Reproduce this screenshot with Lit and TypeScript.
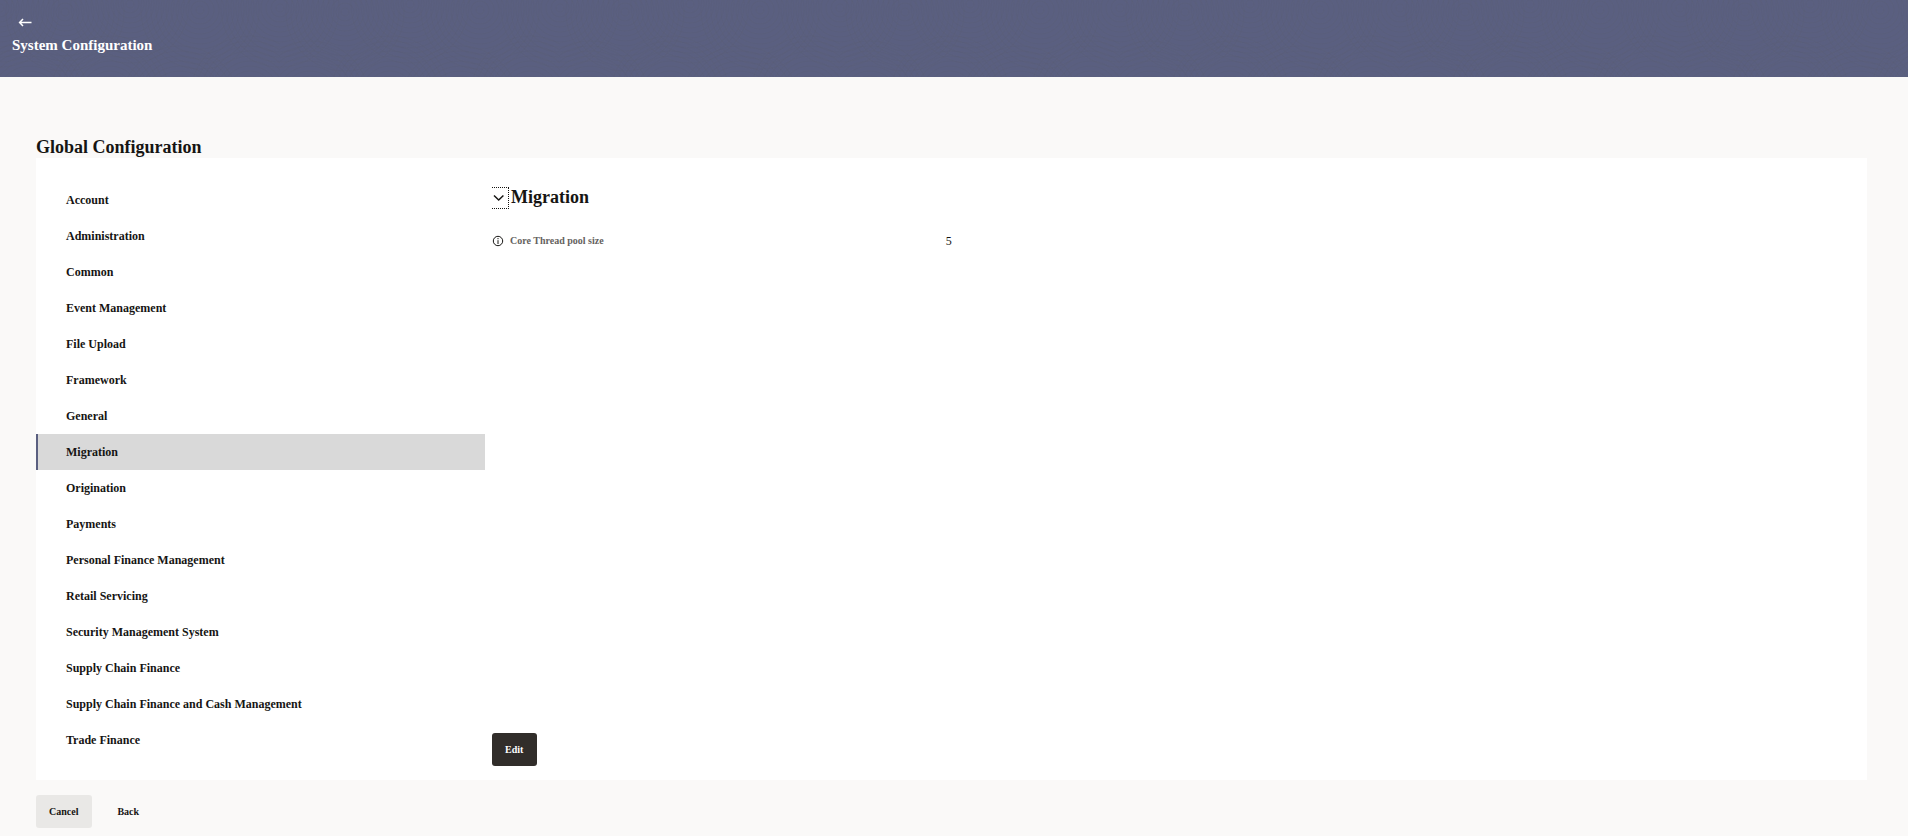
import { LitElement, html, css, svg } from "lit";
import { customElement, state } from "lit/decorators.js";
import { classMap } from "lit/directives/class-map.js";

const CATEGORIES = [
  "Account",
  "Administration",
  "Common",
  "Event Management",
  "File Upload",
  "Framework",
  "General",
  "Migration",
  "Origination",
  "Payments",
  "Personal Finance Management",
  "Retail Servicing",
  "Security Management System",
  "Supply Chain Finance",
  "Supply Chain Finance and Cash Management",
  "Trade Finance",
];

const RING_CENTRES = [
  [0, 8], [65, 12], [130, 4], [200, 10], [280, 8], [30, 100], [110, 95], [180, 105], [250, 95],
];

@customElement("app-root")
export class AppRoot extends LitElement {
  static styles = css`
    :host {
      display: block;
      min-height: 100vh;
      background: #faf9f8;
      color: #161513;
      font-family: "Liberation Serif", "Times New Roman", serif;
      font-weight: 700;
    }
    * {
      box-sizing: border-box;
    }
    button {
      font: inherit;
      color: inherit;
      border: 0;
      background: none;
      cursor: pointer;
    }
    h1,
    h2,
    h3,
    ul,
    dl,
    dd {
      margin: 0;
      padding: 0;
    }
    .header {
      display: grid;
      background: #5a5f80;
      color: #fff;
      overflow: hidden;
    }
    .rings,
    .bar {
      grid-area: 1 / 1;
    }
    .rings {
      width: 100%;
      height: 0;
      min-height: 100%;
    }
    .bar {
      padding: 14px 12px 22px;
    }
    .back-arrow {
      display: block;
      padding: 0 6px;
      height: 18px;
    }
    .back-arrow svg {
      display: block;
    }
    .title {
      margin-top: 3px;
      font-size: 15px;
      line-height: 20px;
    }
    .content {
      padding: 60px 41px 8px 36px;
    }
    .heading {
      padding-bottom: 1px;
      font-size: 18px;
      line-height: 20px;
    }
    .panel {
      display: flex;
      gap: 7px;
      background: #fff;
    }
    .nav {
      flex: 0 0 449px;
      padding: 24px 0 22px;
      list-style: none;
    }
    .item {
      display: block;
      width: 100%;
      height: 36px;
      padding: 0 28px;
      border-left: 2px solid transparent;
      text-align: left;
      font-size: 12px;
    }
    .item.active {
      background: #d9d9d9;
      border-left-color: #5a5f80;
    }
    .detail {
      flex: 1;
      display: flex;
      flex-direction: column;
      padding: 29px 14px 14px 0;
    }
    .section {
      display: flex;
      align-items: center;
      gap: 2px;
    }
    .section-title {
      font-size: 18px;
      line-height: 20px;
      padding-bottom: 2px;
    }
    .toggle {
      display: flex;
      align-items: center;
      width: 17px;
      height: 22px;
      padding: 0 0 0 1px;
      border: 1px dotted #161513;
      border-left: 0;
    }
    .row {
      display: grid;
      grid-template-columns: 1fr 2fr;
      align-items: center;
      margin-top: 23px;
      line-height: 18px;
    }
    .label {
      display: flex;
      align-items: center;
      gap: 6px;
      font-size: 10px;
      color: #65625e;
    }
    .value {
      font-size: 12px;
      font-weight: 400;
    }
    .button {
      height: 33px;
      padding: 0 14px 0 13px;
      border-radius: 3px;
      font-size: 10px;
    }
    .edit {
      align-self: flex-start;
      margin-top: auto;
      background: #312d2a;
      color: #fff;
    }
    .footer {
      display: flex;
      gap: 12px;
      padding-top: 15px;
    }
    .cancel {
      background: #e9e8e6;
    }
  `;

  @state() private selected = "Migration";
  @state() private open = true;

  private rings() {
    return html`<svg class="rings" aria-hidden="true">
      <defs>
        <pattern id="rings" width="280" height="150" patternUnits="userSpaceOnUse">
          ${RING_CENTRES.map(([x, y]) =>
            Array.from({ length: 12 }, (_, i) => svg`<circle cx=${x} cy=${y} r=${4 + i * 5}
              fill="none" stroke="#565b72" stroke-opacity="0.25" stroke-width="1.5" />`)
          )}
        </pattern>
      </defs>
      <rect width="100%" height="100%" fill="url(#rings)" />
    </svg>`;
  }

  render() {
    return html`
      <header class="header">
        ${this.rings()}
        <div class="bar">
          <button class="back-arrow" aria-label="Go back">
            <svg width="15" height="18" viewBox="0 0 15 18" fill="none" stroke="#fff" stroke-width="1.5">
              <path d="M13.500 8.500H2M5 5L1.600 8.500L5 12" />
            </svg>
          </button>
          <h1 class="title">System Configuration</h1>
        </div>
      </header>
      <main class="content">
        <h2 class="heading">Global Configuration</h2>
        <div class="panel">
          <ul class="nav">
            ${CATEGORIES.map(
              (name) => html`<li>
                <button
                  class=${classMap({ item: true, active: name === this.selected })}
                  @click=${() => (this.selected = name)}
                >${name}</button>
              </li>`
            )}
          </ul>
          <section class="detail">
            <div class="section">
              <button
                class="toggle"
                aria-label="Toggle section"
                aria-expanded=${this.open}
                @click=${() => (this.open = !this.open)}
              >
                <svg width="12" height="12" viewBox="0 0 12 12" fill="none" stroke="#161513" stroke-width="1.5">
                  <path d="M1 3.500L5.700 8L10.400 3.500" />
                </svg>
              </button>
              <h3 class="section-title">${this.selected}</h3>
            </div>
            ${this.open
              ? html`<dl class="row">
                  <dt class="label">
                    <svg width="12" height="12" viewBox="0 0 12 12" fill="none" stroke="#161513">
                      <circle cx="6" cy="6" r="4.700" />
                      <path d="M6 5.200V9M6 3V4.200" />
                    </svg>
                    Core Thread pool size
                  </dt>
                  <dd class="value">5</dd>
                </dl>`
              : null}
            <button class="button edit">Edit</button>
          </section>
        </div>
        <footer class="footer">
          <button class="button cancel">Cancel</button>
          <button class="button">Back</button>
        </footer>
      </main>
    `;
  }
}
